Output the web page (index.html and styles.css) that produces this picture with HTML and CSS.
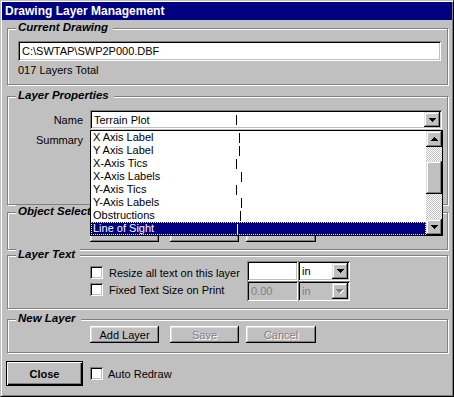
FILE: index.html
```html
<!DOCTYPE html>
<html lang="en">
<head>
    <meta charset="UTF-8">
    <meta name="viewport" content="width=device-width, initial-scale=1.0">
    <title>Drawing Layer Management</title>
    <link rel="stylesheet" href="styles.css">
</head>
<body>
<div class="window">
    <div class="titlebar">Drawing Layer Management</div>

    <div class="content">
        <!-- Current Drawing -->
        <div class="group current-group">
            <span class="group-title">Current Drawing</span>
            <div class="field path-field">C:\SWTAP\SWP2P000.DBF</div>
            <div class="layer-count">017 Layers Total</div>
        </div>

        <!-- Layer Properties -->
        <div class="group props-group">
            <span class="group-title">Layer Properties</span>
            <div class="prop-row">
                <span class="prop-label">Name</span>
                <div class="combo name-combo">
                    <span class="combo-text">Terrain Plot</span>
                    <span class="tab-mark combo-mark"></span>
                    <span class="drop-btn">
                        <svg width="7" height="4" viewBox="0 0 7 4"><path d="M0 0h7v1H0zM1 1h5v1H1zM2 2h3v1H2zM3 3h1v1H3z"/></svg>
                    </span>

                    <!-- open list of the Name combo -->
                    <div class="dropdown">
                        <ul class="dropdown-items">
                            <li>X Axis Label<span class="tab-mark" style="left:148px"></span></li>
                            <li>Y Axis Label<span class="tab-mark" style="left:148px"></span></li>
                            <li>X-Axis Tics<span class="tab-mark" style="left:145px"></span></li>
                            <li>X-Axis Labels<span class="tab-mark" style="left:150px"></span></li>
                            <li>Y-Axis Tics<span class="tab-mark" style="left:145px"></span></li>
                            <li>Y-Axis Labels<span class="tab-mark" style="left:150px"></span></li>
                            <li>Obstructions<span class="tab-mark" style="left:149px"></span></li>
                            <li class="selected">Line of Sight<span class="tab-mark" style="left:146px"></span></li>
                        </ul>
                        <div class="scrollbar">
                            <span class="sb-btn">
                                <svg width="7" height="4" viewBox="0 0 7 4"><path d="M3 0h1v1H3zM2 1h3v1H2zM1 2h5v1H1zM0 3h7v1H0z"/></svg>
                            </span>
                            <div class="sb-track"><div class="sb-thumb"></div></div>
                            <span class="sb-btn">
                                <svg width="7" height="4" viewBox="0 0 7 4"><path d="M0 0h7v1H0zM1 1h5v1H1zM2 2h3v1H2zM3 3h1v1H3z"/></svg>
                            </span>
                        </div>
                    </div>
                </div>
            </div>
            <div class="prop-row summary-row">
                <span class="prop-label">Summary</span>
            </div>
        </div>

        <!-- Object Selection -->
        <div class="group objects-group">
            <span class="group-title">Object Selection</span>
            <button class="btn" title="Select"></button>
            <button class="btn gap-wide" title="Clear"></button>
            <button class="btn gap-narrow wide" title="Invert"></button>
        </div>

        <!-- Layer Text -->
        <div class="group text-group">
            <span class="group-title">Layer Text</span>
            <div class="checks">
                <label class="check-row"><span class="checkbox"></span>Resize all text on this layer</label>
                <label class="check-row"><span class="checkbox"></span>Fixed Text Size on Print</label>
            </div>
            <div class="inputs">
                <div class="input-row">
                    <div class="field small-field"></div>
                    <div class="combo small-combo">
                        <span class="combo-text">in</span>
                        <span class="drop-btn">
                            <svg width="7" height="4" viewBox="0 0 7 4"><path d="M0 0h7v1H0zM1 1h5v1H1zM2 2h3v1H2zM3 3h1v1H3z"/></svg>
                        </span>
                    </div>
                </div>
                <div class="input-row disabled">
                    <div class="field small-field">0.00</div>
                    <div class="combo small-combo">
                        <span class="combo-text">in</span>
                        <span class="drop-btn">
                            <svg width="8" height="5" viewBox="0 0 8 5"><path fill="#fff" d="M1 1h7v1H1zM2 2h5v1H2zM3 3h3v1H3zM4 4h1v1H4z"/><path fill="#808080" d="M0 0h7v1H0zM1 1h5v1H1zM2 2h3v1H2zM3 3h1v1H3z"/></svg>
                        </span>
                    </div>
                </div>
            </div>
        </div>

        <!-- New Layer -->
        <div class="group new-group">
            <span class="group-title">New Layer</span>
            <button class="btn">Add Layer</button>
            <button class="btn gap-wide" disabled>Save</button>
            <button class="btn gap-narrow wide" disabled>Cancel</button>
        </div>

        <div class="footer">
            <button class="btn close-btn">Close</button>
            <label class="check-row auto-redraw"><span class="checkbox"></span>Auto Redraw</label>
        </div>
    </div>
</div>
</body>
</html>
```

FILE: styles.css
```css
* {
    box-sizing: border-box;
}
body {
    margin: 0;
    font-family: "Liberation Sans", Arial, sans-serif;
    font-size: 11px;
    color: #000;
    background: #c0c0c0;
}
.window {
    width: 454px;
    height: 397px;
    padding: 1px;
    background: #c0c0c0;
    border: 1px solid;
    border-color: #c0c0c0 #000 #000 #c0c0c0;
    box-shadow: inset 1px 1px #fff, inset -1px -1px #808080;
    overflow: hidden;
}
.titlebar {
    height: 18px;
    line-height: 18px;
    padding-left: 3px;
    background: #000080;
    color: #fff;
    font-weight: bold;
    font-size: 12px;
}
.content {
    padding: 0 4px 0 5px;
}

/* etched group boxes */
.group {
    position: relative;
    border: 1px solid #808080;
    box-shadow: inset 1px 1px #fff, 1px 1px #fff;
}
.group-title {
    position: absolute;
    top: -8px;
    left: 8px;
    padding: 0 5px 0 2px;
    line-height: 13px;
    background: #c0c0c0;
    font-weight: bold;
    font-style: italic;
    font-size: 11.5px;
}
.current-group {
    margin-top: 8px;
    height: 57px;
    padding: 12px 6px 0 10px;
}
.props-group {
    margin-top: 11px;
    height: 109px;
    padding-top: 13px;
}
.objects-group {
    margin-top: 7px;
    height: 38px;
    padding: 12px 0 0 82px;
    display: flex;
}
.text-group {
    margin-top: 5px;
    height: 54px;
    padding: 5px 0 0 82px;
    display: flex;
}
.new-group {
    margin-top: 10px;
    height: 34px;
    padding: 6px 0 0 82px;
    display: flex;
}

/* sunken fields */
.field, .combo, .checkbox {
    background: #fff;
    box-shadow: inset 1px 1px #808080, inset -1px -1px #fff, inset 2px 2px #000, inset -2px -2px #c0c0c0;
}
.path-field {
    height: 20px;
    line-height: 20px;
    padding-left: 4px;
}
.layer-count {
    margin-top: 3px;
    line-height: 13px;
}

.prop-row {
    display: flex;
    align-items: center;
}
.summary-row {
    margin-top: 5px;
    line-height: 13px;
}
.prop-label {
    width: 76px;
    padding-right: 1px;
    text-align: right;
}
.combo {
    position: relative;
    display: flex;
    align-items: center;
}
.name-combo {
    margin-left: 6px;
    width: 352px;
    height: 19px;
}
.combo-text {
    padding-left: 4px;
}
.drop-btn, .sb-btn {
    display: flex;
    align-items: center;
    justify-content: center;
    background: #c0c0c0;
    box-shadow: inset -1px -1px #000, inset 1px 1px #dfdfdf, inset -2px -2px #808080, inset 2px 2px #fff;
}
.drop-btn {
    position: absolute;
    top: 2px;
    right: 2px;
    bottom: 2px;
    width: 16px;
}
.tab-mark {
    position: absolute;
    top: 2px;
    width: 1px;
    height: 10px;
    background: #000;
}
.combo-mark {
    left: 146px;
    top: 5px;
}

/* open list */
.dropdown {
    position: absolute;
    top: 20px;
    left: 0;
    width: 353px;
    height: 106px;
    border: 1px solid #000;
    background: #fff;
    z-index: 10;
}
.dropdown-items {
    list-style: none;
    margin: 0;
    padding: 0;
    width: 335px;
}
.dropdown-items li {
    position: relative;
    height: 13px;
    line-height: 13px;
    padding-left: 2px;
    white-space: nowrap;
}
.dropdown-items li.selected {
    background: #000080;
    color: #fff;
    outline: 1px dotted #ffff80;
    outline-offset: -1px;
}
.dropdown-items li.selected .tab-mark {
    background: #fff;
}
.scrollbar {
    position: absolute;
    top: 0;
    right: 0;
    width: 16px;
    height: 104px;
    display: flex;
    flex-direction: column;
}
.sb-btn {
    height: 16px;
    flex-shrink: 0;
}
.sb-track {
    flex: 1;
    background: repeating-conic-gradient(#c0c0c0 0 25%, #fff 0 50%) 0 0 / 2px 2px;
}
.sb-thumb {
    margin-top: 14px;
    height: 33px;
    background: #c0c0c0;
    box-shadow: inset -1px -1px #000, inset 1px 1px #dfdfdf, inset -2px -2px #808080, inset 2px 2px #fff;
}

/* buttons */
.btn {
    width: 69px;
    height: 17px;
    padding: 0;
    border: none;
    background: #c0c0c0;
    font-family: inherit;
    font-size: 11px;
    color: #000;
    box-shadow: inset -1px -1px #000, inset 1px 1px #fff, inset -2px -2px #808080, inset 2px 2px #dfdfdf;
}
.btn:disabled {
    color: #808080;
    text-shadow: 1px 1px #fff;
}
.gap-wide {
    margin-left: 11px;
}
.gap-narrow {
    margin-left: 7px;
}
.wide {
    width: 70px;
}

/* checkboxes */
.checks {
    width: 157px;
    padding-top: 3px;
}
.check-row {
    height: 17px;
    display: flex;
    align-items: center;
    white-space: nowrap;
}
.checkbox {
    width: 13px;
    height: 13px;
    margin-right: 6px;
    flex-shrink: 0;
}

.inputs {
    display: flex;
    flex-direction: column;
}
.input-row {
    display: flex;
    height: 20px;
}
.small-field {
    width: 51px;
    padding-left: 4px;
    line-height: 20px;
}
.small-combo {
    width: 52px;
}
.input-row.disabled .field,
.input-row.disabled .combo {
    background: #c0c0c0;
    color: #808080;
}

.footer {
    display: flex;
    align-items: center;
    margin-top: 8px;
    margin-left: -1px;
}
.close-btn {
    width: 77px;
    height: 25px;
    font-weight: bold;
    box-shadow: inset 0 0 0 1px #000, inset 2px 2px #fff, inset -2px -2px #000, inset -3px -3px #808080;
}
.auto-redraw {
    margin-left: 7px;
}
.auto-redraw .checkbox {
    margin-right: 5px;
}
```
